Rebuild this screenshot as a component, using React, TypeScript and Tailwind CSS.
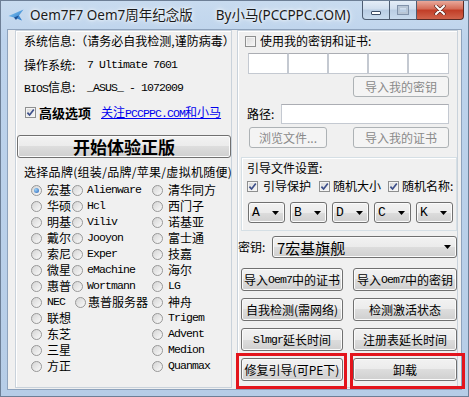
import React from "react";

const mono = "font-['Liberation_Mono','Noto_Sans_CJK_SC',monospace] text-[11.5px] tracking-[-0.9px]";
const btnFace =
  "bg-[linear-gradient(#f2f2f2,#ebebeb_50%,#dddddd_50%,#cfcfcf)] border-[#707070] shadow-[inset_0_0_0_1px_#fbfbfb]";

const isLatin = (s: string) => /^[A-Za-z]/.test(s);

function CheckBox({ checked }: { checked?: boolean }) {
  return (
    <span className="flex h-[11px] w-[11px] shrink-0 items-center justify-center border border-[#8e8f8f] bg-[linear-gradient(135deg,#d9d9d9,#f7f7f7)] shadow-[inset_0_0_0_1px_#f4f4f4]">
      {checked && (
        <svg viewBox="0 0 9 9" className="h-[9px] w-[9px]">
          <path d="M1.4 4.6 L3.6 7 L7.8 1.6" fill="none" stroke="#3d4f8a" strokeWidth="1.7" />
        </svg>
      )}
    </span>
  );
}

function Radio({ checked }: { checked?: boolean }) {
  return (
    <span className="flex h-[11px] w-[11px] shrink-0 items-center justify-center rounded-full border border-[#979797] bg-[linear-gradient(135deg,#d4d4d4,#fafafa)]">
      {checked && <span className="h-[5px] w-[5px] rounded-full bg-[radial-gradient(circle_at_35%_35%,#9bd2f6,#2a62b8)]" />}
    </span>
  );
}

function Btn({
  children,
  className = "",
  disabled,
}: {
  children: React.ReactNode;
  className?: string;
  disabled?: boolean;
}) {
  return (
    <div
      className={`flex shrink-0 items-center justify-center whitespace-nowrap rounded-[3px] border ${
        disabled ? "border-[#adb2b5] bg-[#f4f4f4] text-[#8a8a8a]" : `${btnFace} text-black`
      } ${className}`}
    >
      {children}
    </div>
  );
}

function Arrow() {
  return (
    <svg viewBox="0 0 7 4" className="h-[4px] w-[7px]">
      <path d="M0 0 H7 L3.5 4 Z" fill="#000" />
    </svg>
  );
}

function Label({ text }: { text: string }) {
  return <span className={isLatin(text) ? mono : ""}>{text}</span>;
}

const rows: [string, string | null, string][] = [
  ["宏基", "Alienware", "清华同方"],
  ["华硕", "Hcl", "西门子"],
  ["明基", "Viliv", "诺基亚"],
  ["戴尔", "Jooyon", "富士通"],
  ["索尼", "Exper", "技嘉"],
  ["微星", "eMachine", "海尔"],
  ["惠普", "Wortmann", "LG"],
  ["NEC", "惠普服务器", "神舟"],
  ["联想", null, "Trigem"],
  ["东芝", null, "Advent"],
  ["三星", null, "Medion"],
  ["方正", null, "Quanmax"],
];

export default function App() {
  return (
    <div className="relative h-[397px] w-[469px] overflow-hidden border border-[#6d7f96] bg-[linear-gradient(180deg,#c8dbef_0%,#bdd3ec_10%,#b6cde7_100%)] font-['Noto_Sans_CJK_SC',sans-serif] text-[12px] leading-none text-black">
      {/* title bar */}
      <div className="flex h-[28px] items-start">
        <svg viewBox="0 0 16 12" className="ml-[7px] mt-[8px] h-[12px] w-[16px]">
          <defs>
            <linearGradient id="ic" x1="0" y1="0" x2="1" y2="1">
              <stop offset="0" stopColor="#8fd0f7" />
              <stop offset="1" stopColor="#1f6fc4" />
            </linearGradient>
          </defs>
          <path d="M0.5 7 L15.5 0.5 L11 6.5 L14 11.5 L6 8.5 Z" fill="url(#ic)" />
          <path d="M6 8.5 L11 6.5 L8 11 Z" fill="#1b4f94" />
        </svg>
        <div className="ml-[6px] mt-[6px] flex font-['Noto_Sans','Noto_Sans_CJK_SC',sans-serif] text-[13.5px] leading-[17px] text-[#1a1a1a] [text-shadow:0_0_6px_#fff,0_0_3px_#fff]">
          <span>Oem7F7 Oem7周年纪念版</span>
          <span className="ml-[23px]">By小马(PCCPPC.COM)</span>
        </div>
        <div className="ml-auto mr-[4px] flex h-[19px]">
          <div className="flex h-[19px] w-[28px] items-end justify-center rounded-bl-[4px] border border-t-0 border-[#4e5d72] bg-[linear-gradient(#e4edf7,#d0deee_45%,#b9cde3_50%,#c9dbee)] pb-[4px]">
            <span className="h-[4px] w-[10px] rounded-[1px] border border-[#3c4d66] bg-white" />
          </div>
          <div className="flex h-[19px] w-[27px] items-center justify-center border border-l-0 border-t-0 border-[#4e5d72] bg-[linear-gradient(#e4edf7,#d0deee_45%,#b9cde3_50%,#c9dbee)]">
            <span className="h-[8px] w-[10px] border-2 border-[#b8c6d6] shadow-[0_0_0_1px_#8092aa]" />
          </div>
          <div className="flex h-[19px] w-[47px] items-center justify-center rounded-br-[4px] border border-l-0 border-t-0 border-[#5a2a24] bg-[linear-gradient(#e9a89a,#d46a55_45%,#c13c26_50%,#d1644c)]">
            <svg viewBox="0 0 12 10" className="h-[10px] w-[12px]">
              <path d="M2 1 L10 9 M10 1 L2 9" stroke="#5a2a24" strokeWidth="3.4" strokeLinecap="round" />
              <path d="M2 1 L10 9 M10 1 L2 9" stroke="#fff" strokeWidth="2" strokeLinecap="round" />
            </svg>
          </div>
        </div>
      </div>

      {/* client area */}
      <div className="ml-[6px] flex h-[361px] w-[455px] border border-[#8ea3bd] bg-[#f0f0f0]">
        {/* left panel */}
        <div className="ml-[7px] flex h-[358px] w-[217px] flex-col border border-[#c9d2db] shadow-[inset_1px_1px_0_#fff]">
          <div className="flex h-[20px] items-center whitespace-nowrap pl-[8px]">系统信息:（请务必自我检测,谨防病毒）</div>
          <div className="mt-[2px] flex h-[23px] items-center pl-[8px]">
            <span className="w-[63px]">操作系统:</span>
            <span className={mono}>7 Ultimate 7601</span>
          </div>
          <div className="flex h-[23px] items-center pl-[8px]">
            <span className="w-[63px]">
              <span className={mono}>BIOS</span>信息:
            </span>
            <span className={mono}>_ASUS_ - 1072009</span>
          </div>
          <div className="mt-[2px] flex h-[23px] items-center whitespace-nowrap pl-[9px]">
            <CheckBox checked />
            <span className="ml-[3px] text-[13px] font-bold">高级选项</span>
            <span className="ml-[10px] text-[#0000ee] underline">
              关注<span className={mono}>PCCPPC.COM</span>和小马
            </span>
          </div>
          <Btn className="ml-[1px] mt-[11px] h-[23px] w-[214px] text-[17px] font-bold">开始体验正版</Btn>
          <div className="mt-[3px] flex h-[21px] items-center whitespace-nowrap pl-[8px] tracking-[0.3px]">
            选择品牌(组装/品牌/苹果/虚拟机随便)
          </div>
          {rows.map(([a, b, c], i) => {
            const nec = a === "NEC";
            return (
              <div key={a} className="flex h-[16px] items-center whitespace-nowrap pl-[15px]">
                <div className={`flex items-center gap-[5px] ${nec ? "w-[44px]" : "w-[41px]"}`}>
                  <Radio checked={i === 0} />
                  <Label text={a} />
                </div>
                <div className={`flex items-center ${nec ? "w-[77px] gap-[2px]" : "w-[80px] gap-[4px]"}`}>
                  {b && (
                    <>
                      <Radio />
                      <Label text={b} />
                    </>
                  )}
                </div>
                <div className="flex items-center gap-[5px]">
                  <Radio />
                  <Label text={c} />
                </div>
              </div>
            );
          })}
        </div>

        {/* right panel */}
        <div className="ml-[5px] flex h-[358px] w-[221px] flex-col border border-[#c9d2db] shadow-[inset_1px_1px_0_#fff]">
          <div className="flex h-[20px] items-center pl-[7px]">
            <CheckBox />
            <span className="ml-[4px]">使用我的密钥和证书:</span>
          </div>
          <div className="ml-[10px] mt-[2px] flex h-[21px] w-[201px]">
            {[0, 1, 2, 3, 4].map((k) => (
              <div
                key={k}
                className={`h-[21px] border border-[#c4c9d1] border-t-[#abadb3] bg-white ${k === 4 ? "w-[41px]" : "w-[40px]"}`}
              />
            ))}
          </div>
          <Btn disabled className="ml-[115px] mt-[2px] h-[21px] w-[96px]">
            导入我的密钥
          </Btn>
          <div className="mt-[6px] flex h-[21px] items-center">
            <span className="w-[43px] pl-[9px]">路径:</span>
            <div className="h-[20px] w-[168px] border border-[#c4c9d1] border-t-[#abadb3] bg-white" />
          </div>
          <div className="mt-[3px] flex h-[21px]">
            <Btn disabled className="ml-[11px] h-[21px] w-[78px]">
              浏览文件...
            </Btn>
            <Btn disabled className="ml-[26px] h-[21px] w-[96px]">
              导入我的证书
            </Btn>
          </div>

          <div className="ml-[3px] mt-[9px] flex h-[74px] w-[216px] flex-col border border-[#d5dfe5] shadow-[inset_1px_1px_0_#fff]">
            <div className="flex h-[20px] items-center pl-[5px]">引导文件设置:</div>
            <div className="flex h-[16px] items-center whitespace-nowrap pl-[5px]">
              <CheckBox checked />
              <span className="ml-[5px] w-[56px]">引导保护</span>
              <CheckBox checked />
              <span className="ml-[3px] w-[55px]">随机大小</span>
              <CheckBox checked />
              <span className="ml-[3px]">随机名称:</span>
            </div>
            <div className="mt-[8px] flex h-[21px] gap-[5px] pl-[6px]">
              {["A", "B", "D", "C", "K"].map((l) => (
                <div
                  key={l}
                  className={`flex h-[21px] w-[37px] items-center justify-between rounded-[3px] border pl-[3px] pr-[5px] ${btnFace}`}
                >
                  <span className="font-['Liberation_Mono',monospace] text-[13px]">{l}</span>
                  <Arrow />
                </div>
              ))}
            </div>
          </div>

          <div className="mt-[5px] flex h-[22px] items-center">
            <span className="w-[34px]">密钥:</span>
            <div className={`flex h-[22px] w-[185px] items-center justify-between rounded-[3px] border pl-[4px] pr-[5px] ${btnFace}`}>
              <span className="text-[15px]">7宏基旗舰</span>
              <Arrow />
            </div>
          </div>

          <div className="mt-[10px] flex flex-col gap-[7px]">
            {[
              [
                <>
                  导入<span className={mono}>Oem7</span>中的证书
                </>,
                <>
                  导入<span className={mono}>Oem7</span>中的密钥
                </>,
              ],
              [<>自我检测(需网络)</>, <>检测激活状态</>],
              [
                <>
                  <span className={mono}>Slmgr</span>延长时间
                </>,
                <>注册表延长时间</>,
              ],
              [<>修复引导(可PE下)</>, <>卸载</>],
            ].map((pair, i) => (
              <div key={i} className="flex">
                <Btn className="ml-[3px] h-[23px] w-[102px]">{pair[0]}</Btn>
                <Btn className="ml-[10px] h-[23px] w-[104px]">{pair[1]}</Btn>
              </div>
            ))}
          </div>
        </div>
      </div>

      {/* red annotation boxes */}
      <div className="absolute left-[235px] top-[352px] h-[36px] w-[111px] border-[3px] border-[#e3141c]" />
      <div className="absolute left-[349px] top-[352px] h-[36px] w-[115px] border-[3px] border-[#e3141c]" />
    </div>
  );
}
